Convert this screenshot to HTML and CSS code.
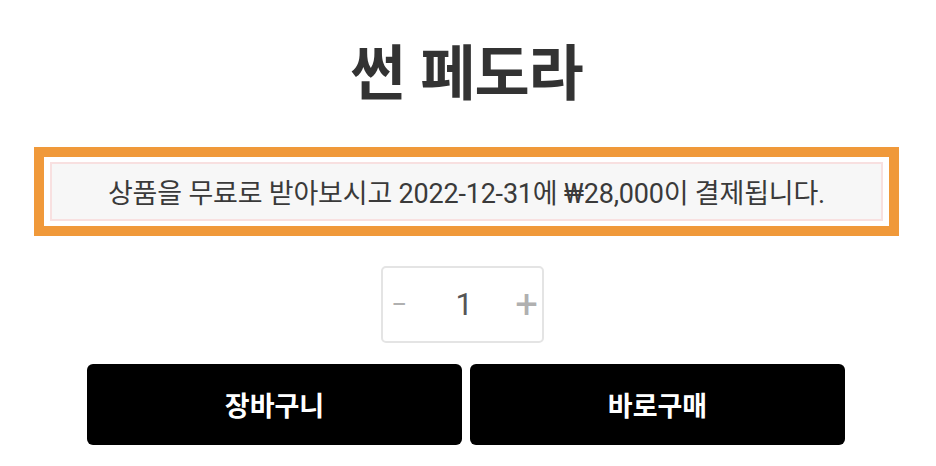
FILE: index.html
```html
<!DOCTYPE html>
<html lang="ko">
<head>
  <meta charset="UTF-8" />
  <meta name="viewport" content="width=device-width, initial-scale=1.0" />
  <title>썬 페도라</title>

  <link rel="stylesheet" href="styles.css">
</head>
<body>

<div class="product">
  <h1 class="product-title">썬 페도라</h1>

  <!-- Free trial notice -->
  <div class="notice-frame">
    <p class="notice">상품을 무료로 받아보시고 2022-12-31에 ₩28,000이 결제됩니다.</p>
  </div>

  <!-- Quantity -->
  <div class="quantity">
    <button class="qty-btn qty-minus">−</button>
    <span class="qty-value">1</span>
    <button class="qty-btn qty-plus">+</button>
  </div>

  <div class="actions">
    <button class="action-btn">장바구니</button>
    <button class="action-btn">바로구매</button>
  </div>
</div>

</body>
</html>
```

FILE: styles.css
```css
/* General Styles */
body {
  font-family: "Noto Sans CJK KR", "Noto Sans", sans-serif;
  margin: 0;
  padding: 0;
  background-color: #ffffff;
  color: #333333;
}

.product {
  width: 865px;
  margin-left: 34px;
  display: flex;
  flex-direction: column;
  align-items: center;
}

.product-title {
  font-size: 60px;
  font-weight: 700;
  line-height: 1;
  margin: 39px 0 0;
  color: #333333;
  letter-spacing: -1px;
}

/* Notice with orange highlight */
.notice-frame {
  align-self: stretch;
  margin-top: 48px;
  border: 10px solid #f0993a;
  padding: 5px 6px;
}

.notice {
  margin: 0;
  height: 55px;
  border: 2px solid #f8e0e0;
  background-color: #f7f7f7;
  display: flex;
  align-items: center;
  justify-content: center;
  font-family: Roboto, "Noto Sans CJK KR", sans-serif;
  font-size: 27px;
  letter-spacing: -0.2px;
  color: #3a3a3a;
}

/* Quantity */
.quantity {
  margin: 30px 8px 0 0;
  width: 163px;
  height: 77px;
  box-sizing: border-box;
  border: 2px solid #e4e4e4;
  border-radius: 5px;
  display: flex;
  align-items: center;
  justify-content: space-between;
  padding: 0 4px 0 8px;
}

.qty-btn {
  background: none;
  border: none;
  padding: 0;
  font-family: Roboto, sans-serif;
  color: #b0b0b0;
  cursor: pointer;
  line-height: 1;
}

.qty-minus {
  font-size: 28px;
}

.qty-plus {
  font-size: 40px;
}

.qty-value {
  font-family: Roboto, sans-serif;
  font-size: 31px;
  color: #555555;
  margin-left: 6px;
}

/* Buttons */
.actions {
  align-self: stretch;
  display: flex;
  gap: 8px;
  margin: 21px 54px 0 53px;
}

.action-btn {
  flex: 1;
  height: 81px;
  border: none;
  border-radius: 6px;
  background-color: #000000;
  color: #ffffff;
  font-family: "Noto Sans CJK KR", sans-serif;
  font-size: 27px;
  font-weight: 700;
  cursor: pointer;
}
```
